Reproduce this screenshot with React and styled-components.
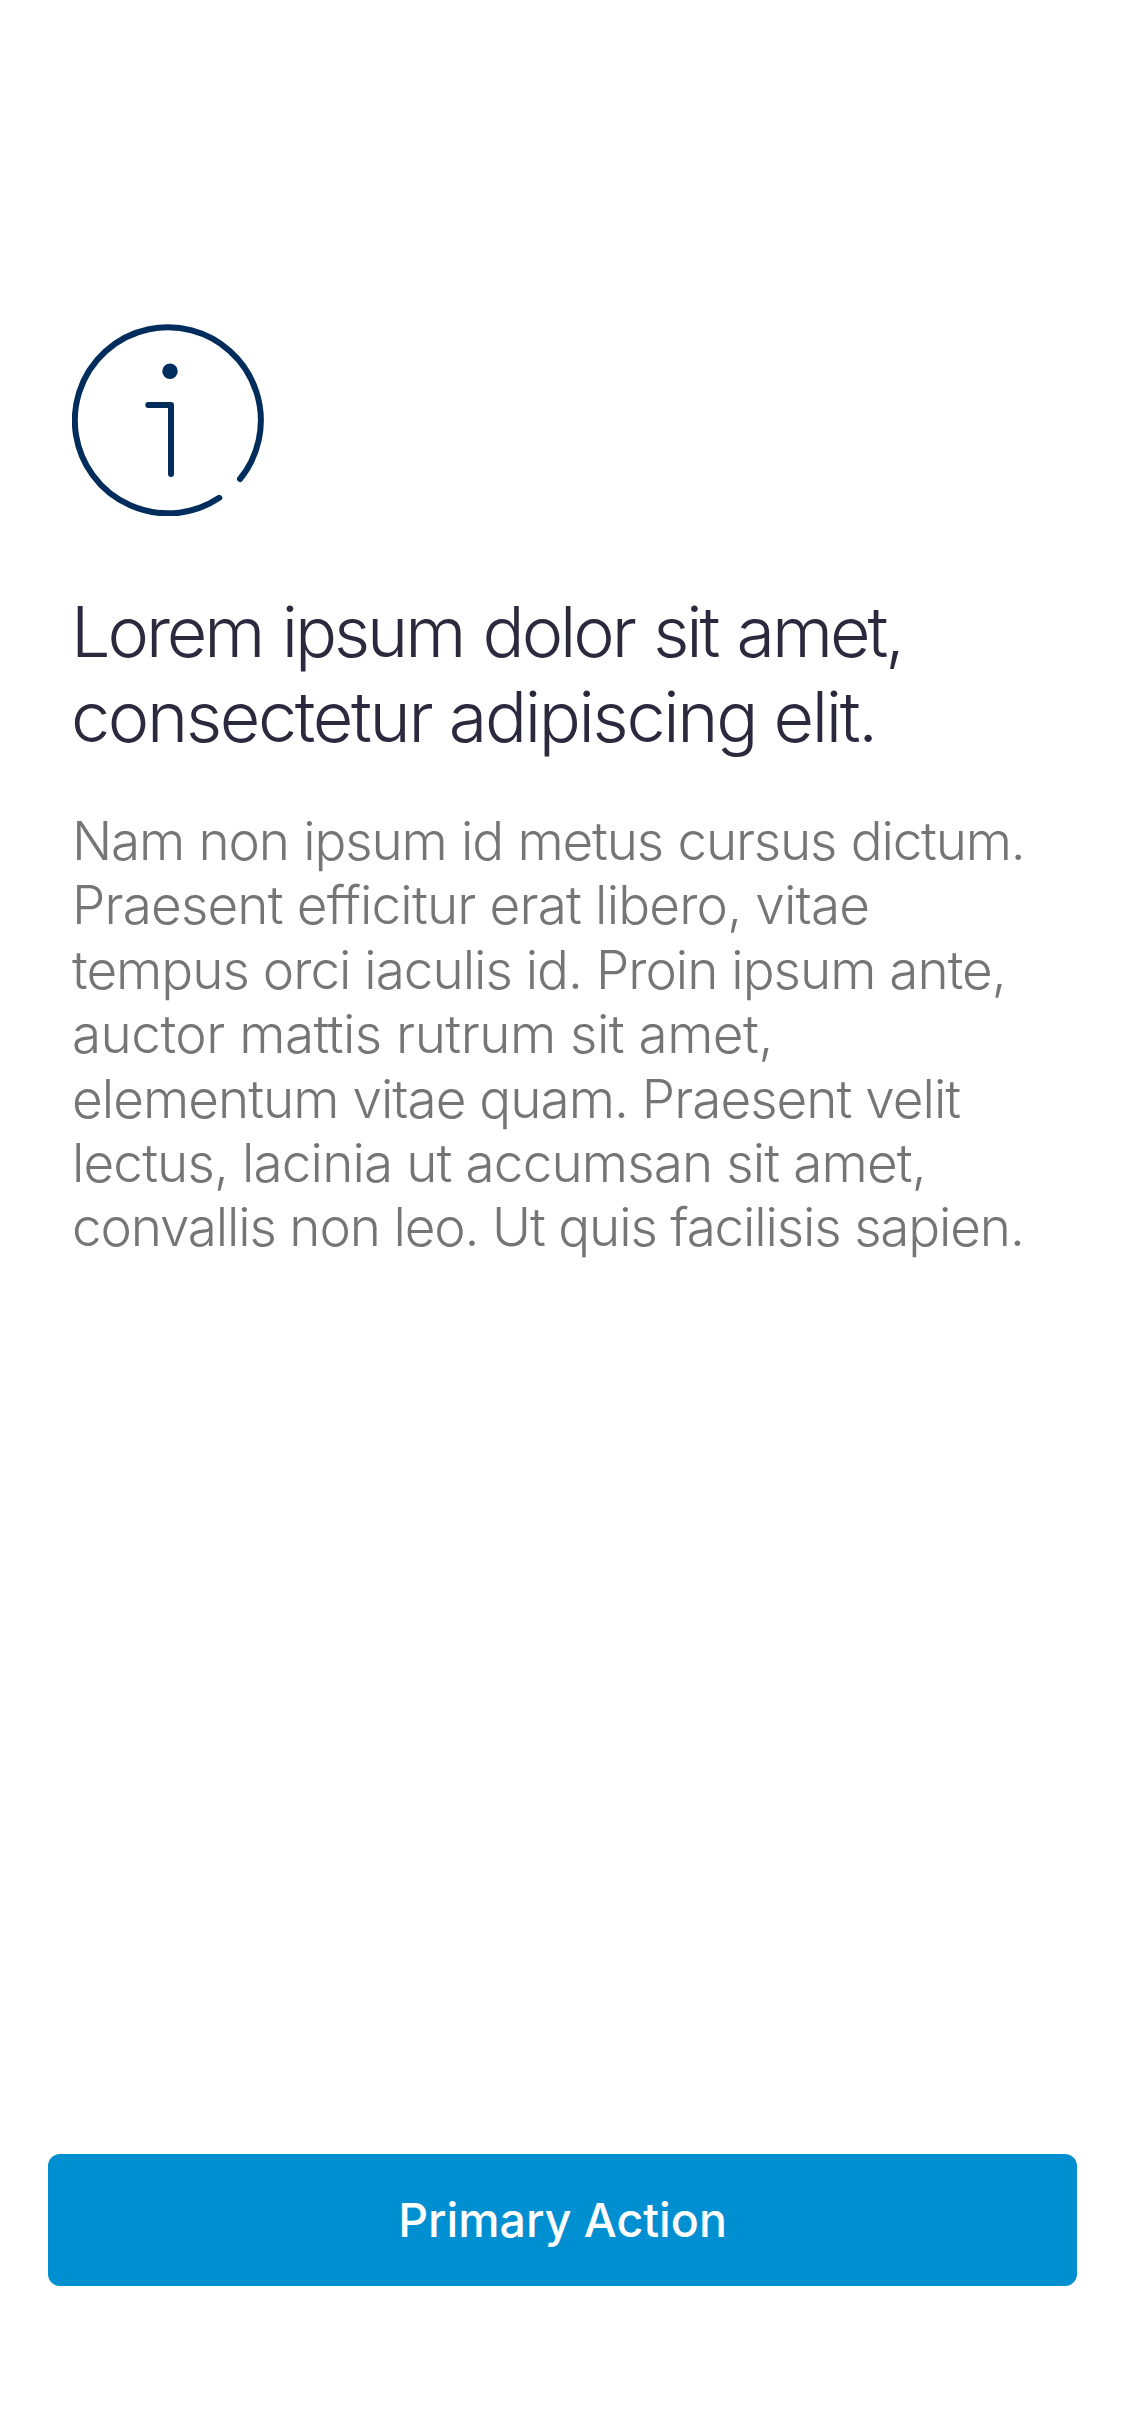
import React from "react";
import styled, { createGlobalStyle } from "styled-components";

const GlobalStyle = createGlobalStyle`
  * { box-sizing: border-box; }
  body { margin: 0; background: #fff; }
`;

const Screen = styled.main`
  display: flex;
  flex-direction: column;
  justify-content: space-between;
  width: 1125px;
  height: 2436px;
  padding: 324px 48px 150px;
  background: #fff;
  font-family: Inter, "Liberation Sans", sans-serif;
  font-kerning: normal;
`;

const Message = styled.section`
  display: flex;
  flex-direction: column;
  align-items: flex-start;
  padding: 0 24px;
`;

const InfoIcon = styled.svg`
  width: 192px;
  height: 192px;
  fill: none;
  stroke: #002d5b;
  stroke-width: 6;
  stroke-linecap: round;
  stroke-linejoin: round;
`;

const Dot = styled.circle`
  fill: #002d5b;
  stroke: none;
`;

const Title = styled.h1`
  margin: 73px 0 0 -1px;
  color: #2b293d;
  font-size: 70px;
  font-weight: 330;
  line-height: 85px;
`;

const Body = styled.p`
  margin: 50px 0 0;
  color: #757575;
  font-size: 53px;
  font-weight: 320;
  line-height: 64.4px;
`;

const Line = styled.span`
  display: block;
  width: max-content;
  white-space: nowrap;
  font-variant-ligatures: none;
  letter-spacing: ${({ $tracking }) => $tracking}px;
  word-spacing: ${({ $wordGap = 0 }) => $wordGap}px;
`;

const PrimaryButton = styled.button`
  display: flex;
  align-items: center;
  justify-content: center;
  width: 100%;
  height: 132px;
  padding: 0;
  border: 0;
  border-radius: 12px;
  background: #0090d1;
  color: #fff;
  font-family: inherit;
  font-size: 46.5px;
  font-weight: 500;
`;

const titleLines = [
  ["Lorem ipsum dolor sit amet,", -3.05, 2.6],
  ["consectetur adipiscing elit.", -2.31],
];

const bodyLines = [
  ["Nam non ipsum id metus cursus dictum.", -1.18, 0.8],
  ["Praesent efficitur erat libero, vitae", -0.82],
  ["tempus orci iaculis id. Proin ipsum ante,", -0.99],
  ["auctor mattis rutrum sit amet,", -0.5],
  ["elementum vitae quam. Praesent velit", -0.97],
  ["lectus, lacinia ut accumsan sit amet,", -0.86],
  ["convallis non leo. Ut quis facilisis sapien.", -1.15],
];

const renderLines = (lines) =>
  lines.map(([text, tracking, wordGap]) => (
    <Line key={text} $tracking={tracking} $wordGap={wordGap}>{text} </Line>
  ));

export default function App() {
  return (
    <>
      <GlobalStyle />
      <Screen>
        <Message>
          <InfoIcon viewBox="0 0 192 192" aria-hidden="true">
            <path d="M147.3 173.8A93 93 0 1 1 168 155" />
            <Dot cx="98" cy="47.3" r="7.7" />
            <path d="M76.3 81H99V150" />
          </InfoIcon>
          <Title>{renderLines(titleLines)}</Title>
          <Body>{renderLines(bodyLines)}</Body>
        </Message>
        <PrimaryButton type="button">Primary Action</PrimaryButton>
      </Screen>
    </>
  );
}
